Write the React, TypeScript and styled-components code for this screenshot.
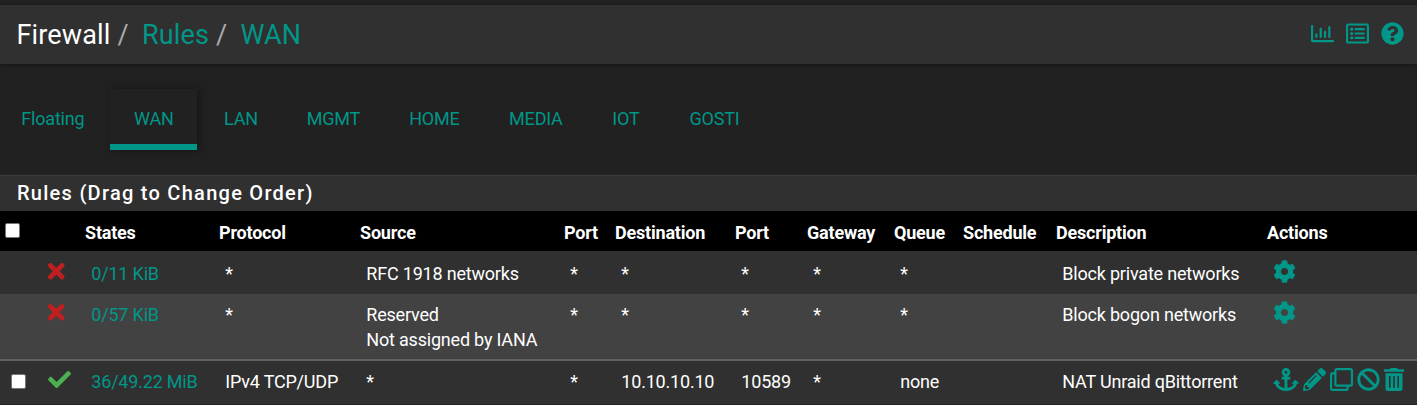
import React from 'react';
import styled, { createGlobalStyle } from 'styled-components';
import {
  FaAnchor,
  FaBan,
  FaCheck,
  FaCog,
  FaPencilAlt,
  FaQuestionCircle,
  FaRegChartBar,
  FaRegClone,
  FaRegListAlt,
} from 'react-icons/fa';

const teal = '#009688';

const GlobalStyle = createGlobalStyle`
  * { box-sizing: border-box; }
  body {
    margin: 0;
    background: #212121;
    color: #fff;
    font-family: Roboto, "Liberation Sans", sans-serif;
    font-size: 18px;
    letter-spacing: -0.2px;
    overflow: hidden;
  }
`;

const Page = styled.div`
  height: 405px;
  padding-top: 5px;
  overflow: hidden;
`;

const Header = styled.header`
  display: flex;
  align-items: center;
  justify-content: space-between;
  height: 59px;
  padding: 0 13px 0 16.5px;
  background: #303030;
  box-shadow: 0 1px 4px rgba(0, 0, 0, 0.4);
`;

const Breadcrumb = styled.nav`
  display: flex;
  font-size: 27px;
  line-height: 32px;
  letter-spacing: 0.15px;
`;

const Crumb = styled.a<{ $root?: boolean }>`
  color: ${(p) => (p.$root ? '#fff' : teal)};
`;

const Slash = styled.span`
  width: 31.4px;
  padding-left: 7px;
  color: #aaa;
`;

const HeaderTools = styled.div`
  display: flex;
  align-items: center;
  gap: 12px;
  margin-top: -2px;
  color: ${teal};
  font-size: 23px;
  svg { display: block; }
`;

const Tabs = styled.nav`
  display: flex;
  margin-top: 25px;
  height: 61px;
  padding-left: 5px;
`;

const Tab = styled.a<{ $width: number; $active?: boolean }>`
  width: ${(p) => p.$width}px;
  padding-top: 19px;
  padding-left: 0.8px;
  line-height: 22px;
  text-align: center;
  color: ${teal};
  border-bottom: 6px solid ${(p) => (p.$active ? teal : 'transparent')};
  box-shadow: ${(p) => (p.$active ? '2px 0 8px rgba(0, 0, 0, 0.4)' : 'none')};

  &:first-child {
    padding-right: 10px;
  }
`;

const Panel = styled.section`
  margin-top: 25px;
`;

const PanelTitle = styled.h2`
  margin: 0;
  height: 36px;
  padding-left: 17px;
  border-top: 1px solid #3b3b3b;
  background: #303030;
  font-size: 20px;
  font-weight: 500;
  line-height: 35px;
  letter-spacing: 1.27px;
`;

const Row = styled.div<{ $height: number; $shade?: string; $separated?: boolean }>`
  display: grid;
  grid-template-columns: 42px 43px 134px 141px 204px 51px 120px 72px 87px 69px 93px 211px 150px;
  height: ${(p) => p.$height}px;
  background: ${(p) => p.$shade ?? '#303030'};
  border-top: ${(p) => (p.$separated ? '2px solid #616161' : 'none')};
  white-space: nowrap;
`;

const HeadCell = styled.div`
  padding-top: 10px;
  line-height: 24px;
  font-weight: 700;
`;

const Cell = styled.div<{ $link?: boolean; $top: number }>`
  padding: ${(p) => p.$top}px 0 0 6.3px;
  line-height: 25px;
  white-space: pre-line;
  color: ${(p) => (p.$link ? teal : '#fff')};
`;

const Check = styled.input<{ $left: number; $top: number }>`
  appearance: none;
  display: block;
  width: 15px;
  height: 15px;
  margin: ${(p) => p.$top}px 0 0 ${(p) => p.$left}px;
  border: 1px solid #767676;
  border-radius: 2px;
  background: #fff;
`;

const Status = styled.div<{ $pass?: boolean; $top: number }>`
  padding: ${(p) => p.$top}px 0 0 6px;
  color: ${(p) => (p.$pass ? '#4caf50' : '#c01f1f')};
  font-size: 23px;
  svg { display: block; }
`;

const Actions = styled.div<{ $top: number }>`
  display: flex;
  align-items: flex-start;
  gap: 4px;
  padding: ${(p) => p.$top}px 0 0 6px;
  color: ${teal};
`;

const ActionIcon = styled.a<{ $width?: number }>`
  flex: none;
  width: ${(p) => p.$width ?? 23}px;
  height: 23px;

  svg {
    display: block;
    width: 100%;
    height: 100%;
  }
`;

const Cross = () => (
  <svg width="16.5" height="16.5" viewBox="0 0 16 16" stroke="currentColor" strokeWidth="4.6" strokeLinecap="round">
    <path d="M2.4 2.4 13.6 13.6M13.6 2.4 2.4 13.6" />
  </svg>
);

const Trash = () => (
  <svg viewBox="0 0 20 23" fill="currentColor">
    <path d="M0.5 1.3H5.8L6.8 0H13.2L14.2 1.3H19.5Q20 1.3 20 1.8V3.8H0V1.8Q0 1.3 0.5 1.3Z" />
    <path
      fillRule="evenodd"
      d="M1.5 5.2H18.5V20.8Q18.5 23 16.3 23H3.7Q1.5 23 1.5 20.8ZM5 8V19.8H6.6V8ZM9.2 8V19.8H10.8V8ZM13.4 8V19.8H15V8Z"
    />
  </svg>
);

const tabs: [string, number][] = [
  ['Floating', 105],
  ['WAN', 87],
  ['LAN', 87],
  ['MGMT', 98],
  ['HOME', 104],
  ['MEDIA', 99],
  ['IOT', 81],
  ['GOSTI', 96],
];

const headings = [
  'States', 'Protocol', 'Source', 'Port', 'Destination', 'Port',
  'Gateway', 'Queue', 'Schedule', 'Description', 'Actions',
];

interface Rule {
  pass?: boolean;
  height: number;
  top: number;
  shade?: string;
  cells: string[];
}

const rules: Rule[] = [
  { height: 43, top: 10, cells: ['0/11 KiB', '*', 'RFC 1918 networks', '*', '*', '*', '*', '*', '', 'Block private networks'] },
  { height: 65, top: 8, shade: '#424242', cells: ['0/57 KiB', '*', 'Reserved\nNot assigned by IANA', '*', '*', '*', '*', '*', '', 'Block bogon networks'] },
  { height: 45, top: 8, pass: true, cells: ['36/49.22 MiB', 'IPv4 TCP/UDP', '*', '*', '10.10.10.10', '10589', '*', 'none', '', 'NAT Unraid qBittorrent'] },
];

export default function App() {
  return (
    <Page>
      <GlobalStyle />
      <Header>
        <Breadcrumb>
          <Crumb $root>Firewall</Crumb>
          <Slash>/</Slash>
          <Crumb>Rules</Crumb>
          <Slash>/</Slash>
          <Crumb>WAN</Crumb>
        </Breadcrumb>
        <HeaderTools>
          <FaRegChartBar />
          <FaRegListAlt />
          <FaQuestionCircle />
        </HeaderTools>
      </Header>
      <Tabs>
        {tabs.map(([label, width]) => (
          <Tab key={label} $width={width} $active={label === 'WAN'}>{label}</Tab>
        ))}
      </Tabs>
      <Panel>
        <PanelTitle>Rules (Drag to Change Order)</PanelTitle>
        <Row $height={40} $shade="#000">
          <Check type="checkbox" $left={5} $top={12} />
          <span />
          {headings.map((h, i) => <HeadCell key={i}>{h}</HeadCell>)}
        </Row>
        {rules.map((rule, r) => (
          <Row key={r} $height={rule.height} $shade={rule.shade} $separated={rule.pass}>
            {rule.pass ? <Check type="checkbox" $left={11} $top={13} /> : <span />}
            <Status $pass={rule.pass} $top={rule.pass ? 7 : rule.top + 2}>
              {rule.pass ? <FaCheck /> : <Cross />}
            </Status>
            {rule.cells.map((text, i) => <Cell key={i} $link={i === 0} $top={rule.top}>{text}</Cell>)}
            <Actions $top={rule.top - 1}>
              {rule.pass ? (
                <>
                  <ActionIcon $width={26}><FaAnchor /></ActionIcon>
                  <ActionIcon><FaPencilAlt /></ActionIcon>
                  <ActionIcon><FaRegClone /></ActionIcon>
                  <ActionIcon><FaBan /></ActionIcon>
                  <ActionIcon $width={20}><Trash /></ActionIcon>
                </>
              ) : (
                <ActionIcon><FaCog /></ActionIcon>
              )}
            </Actions>
          </Row>
        ))}
      </Panel>
    </Page>
  );
}
